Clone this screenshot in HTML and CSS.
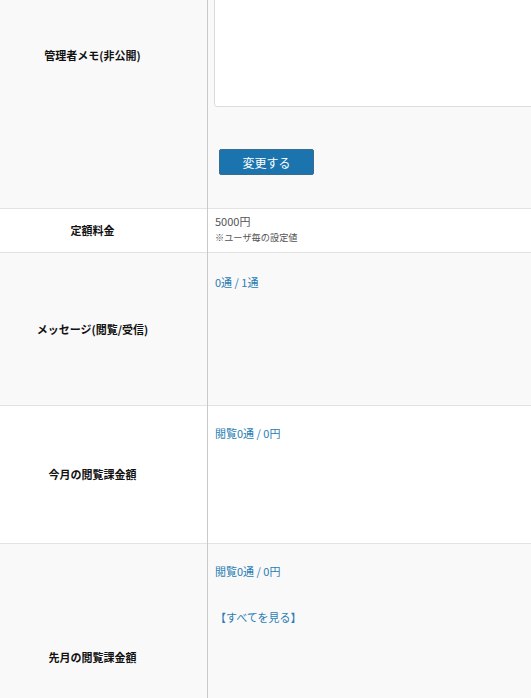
FILE: index.html
```html
<!DOCTYPE html>
<html lang="ja">
<head>
    <meta charset="UTF-8">
    <meta name="viewport" content="width=device-width, initial-scale=1.0">
    <title>ユーザ詳細</title>
    <link rel="stylesheet" href="styles.css">
</head>
<body>

    <div id="detail-wrap">
        <table class="detail-table">
            <tr class="row-memo alt">
                <th>管理者メモ(非公開)</th>
                <td>
                    <textarea class="memo-box"></textarea>
                    <button class="btn-update">変更する</button>
                </td>
            </tr>
            <tr class="row-fee">
                <th>定額料金</th>
                <td>
                    <div class="value">5000円</div>
                    <div class="note">※ユーザ毎の設定値</div>
                </td>
            </tr>
            <tr class="row-msg alt">
                <th>メッセージ(閲覧/受信)</th>
                <td><a class="link" href="#">0通 / 1通</a></td>
            </tr>
            <tr class="row-month">
                <th>今月の閲覧課金額</th>
                <td><a class="link" href="#">閲覧0通 / 0円</a></td>
            </tr>
            <tr class="row-last alt">
                <th>先月の閲覧課金額</th>
                <td>
                    <a class="link" href="#">閲覧0通 / 0円</a>
                    <div class="see-all"><a class="link" href="#">【すべてを見る】</a></div>
                </td>
            </tr>
        </table>
    </div>

</body>
</html>
```

FILE: styles.css
```css
body {
    margin: 0;
    overflow: hidden;
    background: #fff;
    font-family: 'Noto Sans CJK JP', 'Noto Sans', sans-serif;
    font-size: 11px;
    color: #555;
}

#detail-wrap {
    margin-top: -98px;
    width: 640px;
}

.detail-table {
    border-collapse: collapse;
    width: 100%;
}

.detail-table tr {
    border-bottom: 1px solid #e2e2e2;
    background: #fff;
}

.detail-table tr.alt {
    background: #f9f9f9;
}

.detail-table th {
    width: 185px;
    padding: 0 22px 0 0;
    border-right: 1px solid #c9c9c9;
    font-size: 11px;
    font-weight: bold;
    color: #111;
    text-align: center;
    vertical-align: middle;
    line-height: 16px;
}

.detail-table td {
    padding: 19px 0 0 7px;
    vertical-align: top;
    line-height: 16px;
}

/* memo row */
.row-memo td {
    height: 306px;
    padding: 6px 0 0 6px;
    box-sizing: border-box;
}

.memo-box {
    display: block;
    box-sizing: border-box;
    width: 420px;
    height: 199px;
    margin: 0;
    border: 1px solid #dcdcdc;
    border-radius: 3px;
    background: #fff;
    resize: none;
}

.btn-update {
    display: block;
    width: 95px;
    height: 26px;
    margin: 42px 0 0 5px;
    padding: 0;
    background-color: #1b74ae;
    border: 1px solid #3c6c8c;
    border-radius: 2px;
    color: #fff;
    font-family: inherit;
    font-size: 12px;
    cursor: pointer;
}

/* fee row */
.row-fee td {
    height: 44px;
    padding: 4px 0 0 7px;
    box-sizing: border-box;
}

.row-fee .value {
    color: #555;
}

.row-fee .note {
    margin-top: 1px;
    font-size: 9.2px;
    line-height: 14px;
    color: #555;
}

.row-msg td {
    height: 153px;
    padding-top: 21px;
    box-sizing: border-box;
}

.row-month td {
    height: 138px;
    box-sizing: border-box;
}

.row-last td {
    height: 227px;
    box-sizing: border-box;
}

.link {
    color: #2a7db3;
    text-decoration: none;
}

.see-all {
    margin-top: 30px;
}
```
